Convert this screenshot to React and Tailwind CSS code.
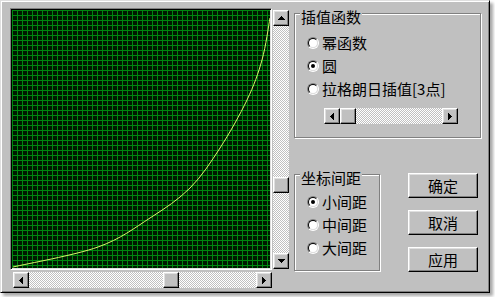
import React from 'react';

const raised = 'bg-[#c0c0c0] border border-t-white border-l-white border-r-black border-b-black shadow-[inset_-1px_-1px_0_#808080,inset_1px_1px_0_#dfdfdf]';
const dither = 'bg-[repeating-conic-gradient(#c0c0c0_0%_25%,#ffffff_0%_50%)] bg-size-[2px_2px]';

const arrows = {
    up: { w: 7, h: 4, d: 'M3 0h1v1H3zM2 1h3v1H2zM1 2h5v1H1zM0 3h7v1H0z' },
    down: { w: 7, h: 4, d: 'M0 0h7v1H0zM1 1h5v1H1zM2 2h3v1H2zM3 3h1v1H3z' },
    left: { w: 4, h: 7, d: 'M3 0h1v7H3zM2 1h1v5H2zM1 2h1v3H1zM0 3h1v1H0z' },
    right: { w: 4, h: 7, d: 'M0 0h1v7H0zM1 1h1v5H1zM2 2h1v3H2zM3 3h1v1H3z' },
};

const ArrowBtn = ({ dir }) => {
    const a = arrows[dir];
    return (
        <div className={`${raised} w-4 h-4 shrink-0 flex items-center justify-center`}>
            <svg width={a.w} height={a.h} shapeRendering="crispEdges">
                <path d={a.d} fill="#000" />
            </svg>
        </div>
    );
};

const Thumb = () => <div className={`${raised} w-4 h-4 shrink-0`} />;

const HScroll = ({ className, spacer }) => (
    <div className={`flex h-4 ${className}`}>
        <ArrowBtn dir="left" />
        <div className={`flex-1 flex ${dither}`}>
            <div className={spacer} />
            <Thumb />
        </div>
        <ArrowBtn dir="right" />
    </div>
);

const VScroll = ({ className, spacer }) => (
    <div className={`flex flex-col w-4 ${className}`}>
        <ArrowBtn dir="up" />
        <div className={`flex-1 flex flex-col ${dither}`}>
            <div className={spacer} />
            <Thumb />
        </div>
        <ArrowBtn dir="down" />
    </div>
);

const Radio = ({ checked, label }) => (
    <div className="h-[23px] flex items-center">
        <span className="w-3 h-3 rounded-full border border-t-[#808080] border-l-[#808080] border-r-white border-b-white flex">
            <span className="flex-1 rounded-full bg-white border border-t-black border-l-black border-r-[#dfdfdf] border-b-[#dfdfdf] flex items-center justify-center">
                {checked && <span className="w-1 h-1 rounded-full bg-black" />}
            </span>
        </span>
        <span className="ml-[3px] leading-[16px]">{label}</span>
    </div>
);

const Group = ({ title, className, children }) => (
    <fieldset className={`border border-[#808080] shadow-[inset_1px_1px_0_#ffffff,1px_1px_0_#ffffff] px-[5px] ${className}`}>
        <legend className="px-px pt-[7px] leading-[16px] bg-[#c0c0c0]">{title}</legend>
        {children}
    </fieldset>
);

const Button = ({ children }) => (
    <button className={`${raised} w-[70px] h-[25px] flex items-center justify-center leading-[16px]`}>{children}</button>
);

// key points of the interpolated curve, in plot coordinates (plot is 258x258)
const keys = [[1, 257], [86, 237], [138, 208], [178, 178], [208, 138], [235, 90], [250, 50], [258, 8]];

// catmull-rom through the key points
const curvePath = () => {
    let d = `M${keys[0][0]} ${keys[0][1]}`;
    for (let i = 0; i < keys.length - 1; i++) {
        const p0 = keys[i - 1] || keys[i];
        const p1 = keys[i];
        const p2 = keys[i + 1];
        const p3 = keys[i + 2] || p2;
        const c1 = [p1[0] + (p2[0] - p0[0]) / 6, p1[1] + (p2[1] - p0[1]) / 6];
        const c2 = [p2[0] - (p3[0] - p1[0]) / 6, p2[1] - (p3[1] - p1[1]) / 6];
        d += ` C${c1[0]} ${c1[1]} ${c2[0]} ${c2[1]} ${p2[0]} ${p2[1]}`;
    }
    return d;
};

const Plot = () => (
    <svg width="258" height="258" shapeRendering="crispEdges" className="block">
        <defs>
            <pattern id="grid" width="5" height="5" patternUnits="userSpaceOnUse">
                <rect width="5" height="5" fill="#001a00" />
                <path d="M0 0h5v1H0zM0 0h1v5H0z" fill="#008810" />
            </pattern>
        </defs>
        <rect width="258" height="258" fill="url(#grid)" />
        <path d={curvePath()} fill="none" stroke="#d8f56a" strokeWidth="1" shapeRendering="auto" />
    </svg>
);

export default function App() {
    return (
        <div className="w-[495px] h-[297px] bg-white text-black text-[15px] font-['Noto_Sans_CJK_SC',sans-serif]">
            <div className="w-[490px] h-[293px] bg-[#c0c0c0] border border-t-[#dfdfdf] border-l-[#dfdfdf] border-r-black border-b-black shadow-[inset_1px_1px_0_#ffffff,inset_-1px_-1px_0_#808080,3px_3px_3px_rgba(0,0,0,0.35)] p-px flex items-start">
                <div className="flex flex-col ml-[8px] mt-[6px]">
                    <div className="w-[262px] h-[262px] border border-t-[#808080] border-l-[#808080] border-r-white border-b-white shadow-[inset_1px_1px_0_#000000,inset_-1px_-1px_0_#dfdfdf] p-px">
                        <Plot />
                    </div>
                    <HScroll className="ml-[3px] mt-[2px] w-[259px]" spacer="w-[134px] shrink-0" />
                </div>
                <VScroll className="ml-px mt-[8px] h-[259px]" spacer="h-[151px] shrink-0" />
                <div className="ml-[5px] flex flex-col">
                    <Group title="插值函数" className="w-[187px] h-[136px]">
                        <div className="ml-[7px] mt-[6px]">
                            <Radio label="幂函数" />
                            <Radio label="圆" checked />
                            <Radio label="拉格朗日插值[3点]" />
                            <HScroll className="ml-[17px] mt-[8px] w-[134px]" spacer="w-0" />
                        </div>
                    </Group>
                    <div className="flex items-start mt-[25px]">
                        <Group title="坐标间距" className="w-[86px] h-[108px]">
                            <div className="ml-[7px] mt-[4px]">
                                <Radio label="小间距" checked />
                                <Radio label="中间距" />
                                <Radio label="大间距" />
                            </div>
                        </Group>
                        <div className="ml-[28px] mt-[10px] flex flex-col gap-[12px]">
                            <Button>确定</Button>
                            <Button>取消</Button>
                            <Button>应用</Button>
                        </div>
                    </div>
                </div>
            </div>
        </div>
    );
}
